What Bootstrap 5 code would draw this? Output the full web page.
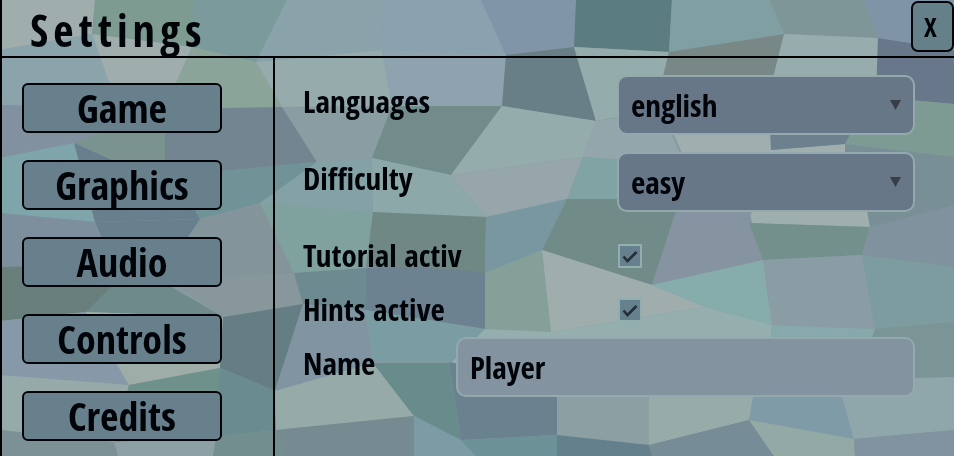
<!DOCTYPE html>
<html lang="en">
<head>
<meta charset="utf-8">
<meta name="viewport" content="width=device-width, initial-scale=1">
<title>Settings</title>
<link rel="stylesheet" href="https://cdn.jsdelivr.net/npm/bootstrap@5.3.0/dist/css/bootstrap.min.css">
<style>
  body { font-family: "Liberation Sans Narrow", "Open Sans Condensed", "Liberation Sans", sans-serif; color: #000408; background: #869ba1; }
  .mosaic { z-index: -1; }
  .window-frame { border-left: 2px solid #000; }
  .title-bar { height: 58px; border-bottom: 2px solid #000; padding-left: 28px; }
  .title-text { font-size: 44px; line-height: 60px; font-weight: 700; letter-spacing: 5px; }
  .close-btn { width: 43px; height: 51px; margin-top: 1px; border: 2px solid #000408; border-radius: 7px; background: #66808a; color: #000408; font-size: 27px; line-height: 1; padding: 0 4px 0 0; }
  .side-menu { width: 273px; border-right: 2px solid #000; padding: 25px 51px 15px 20px; gap: 27px; }
  .side-btn { height: 50px; border: 2px solid #000408; border-radius: 6px; background: #67808c; color: #000408; font-size: 40px; line-height: 46px; padding: 0; font-weight: 700; }
  .side-btn:hover, .close-btn:hover { background: #7690a0; color: #000408; border-color: #000408; }
  .options { padding: 17px 39px 20px 28px; }
  .option { display: grid; grid-template-columns: 314fr 298fr; }
  .option-select { margin-bottom: 17px; }
  .option-name { grid-template-columns: 153fr 459fr; }
  .option-tick { height: 54px; }
  .option-label { font-size: 31px; line-height: 40px; font-weight: 700; white-space: nowrap; padding-bottom: 2px; }
  .raised { padding-bottom: 8px; }
  .field { height: 60px; border: 2px solid #93a9ad; border-radius: 10px; font-size: 31px; line-height: 40px; font-weight: 700; color: #000408; padding: 0 12px; }
  .field-select { background: #677788 url("data:image/svg+xml,%3Csvg xmlns='http://www.w3.org/2000/svg' width='11' height='10'%3E%3Cpath d='M0 0H11L5.500 10Z' fill='%23373e48'/%3E%3C/svg%3E") no-repeat right 12px center; appearance: none; }
  .field-text, .field-text:focus { background: #8394a0; color: #000408; border-color: #93a9ad; }
  .tick { appearance: none; width: 24px; height: 24px; margin: 0 0 0 1px; border: 2px solid #93aeae; background: #67808d; }
  .tick:checked { background: #67808d url("data:image/svg+xml,%3Csvg xmlns='http://www.w3.org/2000/svg' width='20' height='20'%3E%3Cpath d='M3.500 10.500L7.500 15L16.500 6' fill='none' stroke='%23242e37' stroke-width='2.600'/%3E%3C/svg%3E") no-repeat center; }
</style>
</head>
<body>
<svg class="mosaic position-fixed top-0 start-0 w-100 h-100" viewBox="0 0 954 456" preserveAspectRatio="none" aria-hidden="true">
  <g>
    <path fill="#9fadad" d="M0 0H95L92 34L0 50Z"/>
    <path fill="#7d9b90" d="M95 0H193L192 47L92 34Z"/>
    <path fill="#7a9a9b" d="M193 0H287L256 62L192 47Z"/>
    <path fill="#8aa3ab" d="M287 0H383L382 50L256 62Z"/>
    <path fill="#8aa2af" d="M383 0H481L506 55L382 50Z"/>
    <path fill="#8095a8" d="M481 0H576L574 47L506 55Z"/>
    <path fill="#5c7d80" d="M576 0H672L669 52L574 47Z"/>
    <path fill="#7f9fa3" d="M672 0H770L784 34L669 52Z"/>
    <path fill="#7f9699" d="M770 0H864L878 38L784 34Z"/>
    <path fill="#8094a8" d="M864 0H954V50L878 38Z"/>
  </g>
  <g>
    <path fill="#8ba4ac" d="M0 50L92 34L118 108L0 105Z"/>
    <path fill="#a0adad" d="M92 34L192 47L165 108H118Z"/>
    <path fill="#8aa499" d="M192 47L256 62L282 107L165 110Z"/>
    <path fill="#96abac" d="M256 62L382 50L392 106L282 107Z"/>
    <path fill="#8fa2af" d="M382 50L506 55L502 106H392Z"/>
    <path fill="#697f88" d="M506 55L574 47L596 121L502 106Z"/>
    <path fill="#95acac" d="M574 47L669 52L655 110L596 121Z"/>
    <path fill="#788887" d="M669 52L784 34L765 110L655 110Z"/>
    <path fill="#97acac" d="M784 34L878 38L876 110H765Z"/>
    <path fill="#68788a" d="M878 38L954 50V104L876 97Z"/>
  </g>
  <g>
    <path fill="#8291a0" d="M0 105L165 109L74 143L0 158Z"/>
    <path fill="#7b938f" d="M74 143L165 109V172L112 160Z"/>
    <path fill="#728591" d="M165 109L282 107L317 162L222 171L165 176Z"/>
    <path fill="#8a9da3" d="M282 107L392 106L372 158L317 162Z"/>
    <path fill="#718c8b" d="M392 106H502L451 175L372 158Z"/>
    <path fill="#95acad" d="M502 106L596 121L583 157L451 175Z"/>
    <path fill="#92a6ab" d="M596 121L672 110V135L685 165L583 157Z"/>
    <path fill="#a0afad" d="M672 130H770L771 150L845 144L848 160H685Z"/>
    <path fill="#6c818d" d="M770 125H855L845 144L771 150Z"/>
    <path fill="#7d9b93" d="M876 97L954 104V157L845 144Z"/>
  </g>
  <g>
    <path fill="#7ea5aa" d="M0 158L74 143L95 222L0 213Z"/>
    <path fill="#687f8e" d="M74 143L112 160L222 171L193 207L200 219L95 222Z"/>
    <path fill="#6f9397" d="M222 171L317 162L260 203L200 219L193 207Z"/>
    <path fill="#84a1a5" d="M317 162L372 158L373 212L260 203Z"/>
    <path fill="#8da8a9" d="M372 158L451 175L486 217L373 212Z"/>
    <path fill="#96a6aa" d="M451 175L583 157L567 199L486 217Z"/>
    <path fill="#80a3a3" d="M583 157L685 165L660 205L567 199Z"/>
    <path fill="#788f95" d="M845 144L954 157V230H870L845 190Z"/>
    <path fill="#9eafad" d="M755 200H865L870 227L749 223Z"/>
  </g>
  <g>
    <path fill="#7d8f9c" d="M0 213L95 222L112 275L0 267Z"/>
    <path fill="#687f8e" d="M95 222L200 219L180 250L112 265Z"/>
    <path fill="#84949b" d="M200 219L260 203L294 273L223 290L170 270Z"/>
    <path fill="#80a29f" d="M260 203L373 212L366 268L294 273Z"/>
    <path fill="#6f8884" d="M373 212L486 217L485 273L366 267Z"/>
    <path fill="#7997a0" d="M486 217L567 199L542 250L485 273Z"/>
    <path fill="#718b88" d="M567 199H680L652 285L542 250Z"/>
    <path fill="#8594a0" d="M678 205H747L763 260L652 285Z"/>
    <path fill="#73908c" d="M749 223L870 227L862 255L763 260Z"/>
    <path fill="#7f929d" d="M870 227L954 205V267L862 255Z"/>
  </g>
  <g>
    <path fill="#687f7c" d="M0 267L112 265V290L86 312L0 321Z"/>
    <path fill="#6f8a8b" d="M112 286L170 286L223 317L86 312Z"/>
    <path fill="#87979c" d="M170 280L294 273L303 304L223 317Z"/>
    <path fill="#6d8a90" d="M294 273L366 268L365 310L303 304Z"/>
    <path fill="#6c8290" d="M366 268Q425 265 485 273V329L365 310Z"/>
    <path fill="#84a098" d="M485 273L542 250L551 332L485 329Z"/>
    <path fill="#9fadad" d="M542 250L652 285L705 307L551 332Z"/>
    <path fill="#86acac" d="M652 285L763 260L772 325L705 307Z"/>
    <path fill="#8a9ca4" d="M763 260L862 255L875 329L772 325Z"/>
    <path fill="#7c9c9f" d="M862 255L954 267V322L875 329Z"/>
  </g>
  <g>
    <path fill="#8799a9" d="M0 321L86 312L129 385L0 375Z"/>
    <path fill="#9fada9" d="M86 312L223 317L220 368L129 385Z"/>
    <path fill="#657e83" d="M223 317L303 304L275 391L220 368Z"/>
    <path fill="#8194a2" d="M303 304L365 310L373 363L275 391Z"/>
    <path fill="#7a9da3" d="M365 310L485 329L452 362H373Z"/>
    <path fill="#95aeae" d="M485 329L551 332L705 307L772 325L770 365H449Z"/>
    <path fill="#87a9ab" d="M772 325L875 329L868 350H770Z"/>
    <path fill="#7b9495" d="M875 329L954 322V377L905 380L868 350Z"/>
  </g>
  <g>
    <path fill="#95aaa9" d="M0 375L129 385L114 442L0 430Z"/>
    <path fill="#6f918b" d="M129 385L220 368V440L114 442Z"/>
    <path fill="#6b8c8e" d="M220 368L275 391L276 430L216 437Z"/>
    <path fill="#96aaa7" d="M275 391L373 363L414 416L276 430Z"/>
    <path fill="#688b8c" d="M373 363H449L461 440L414 416Z"/>
    <path fill="#6a8290" d="M449 362L557 380V435L461 440Z"/>
    <path fill="#8c9fa3" d="M557 380H649V445L557 435Z"/>
    <path fill="#97aba8" d="M649 380H756L749 420L649 445Z"/>
    <path fill="#7f9ba8" d="M756 380H837L854 439L749 420Z"/>
    <path fill="#8fa6ab" d="M837 380L954 377V430L854 439Z"/>
  </g>
  <g>
    <path fill="#7c9196" d="M0 430L114 442L118 456H0Z"/>
    <path fill="#8ca0a5" d="M114 442L216 437L213 456H118Z"/>
    <path fill="#738e8e" d="M216 437L276 430L285 456H213Z"/>
    <path fill="#768a92" d="M276 430L414 416V456H285Z"/>
    <path fill="#7c9ba4" d="M414 416L461 440L476 456H414Z"/>
    <path fill="#6c9196" d="M461 440L557 435V456H476Z"/>
    <path fill="#64808d" d="M557 435L649 445L652 456H557Z"/>
    <path fill="#768c97" d="M649 445L749 420L774 456H652Z"/>
    <path fill="#93a9a5" d="M749 420L854 439L855 456H774Z"/>
    <path fill="#8193a0" d="M854 439L954 430V456H855Z"/>
  </g>
</svg>

<div class="window-frame d-flex flex-column min-vh-100">
  <header class="title-bar d-flex align-items-start justify-content-between">
    <h1 class="title-text m-0">Settings</h1>
    <button type="button" class="btn close-btn" aria-label="Close settings">X</button>
  </header>
  <div class="d-flex flex-grow-1">
    <nav class="side-menu d-flex flex-column flex-shrink-0" aria-label="Settings sections">
      <button type="button" class="btn side-btn">Game</button>
      <button type="button" class="btn side-btn">Graphics</button>
      <button type="button" class="btn side-btn">Audio</button>
      <button type="button" class="btn side-btn">Controls</button>
      <button type="button" class="btn side-btn">Credits</button>
    </nav>
    <main class="options flex-grow-1">
      <form>
        <div class="option option-select align-items-center">
          <label class="option-label raised" for="language">Languages</label>
          <select class="field field-select w-100" id="language"><option>english</option></select>
        </div>
        <div class="option option-select align-items-center">
          <label class="option-label raised" for="difficulty">Difficulty</label>
          <select class="field field-select w-100" id="difficulty"><option>easy</option></select>
        </div>
        <div class="option option-tick align-items-center">
          <label class="option-label" for="tutorial">Tutorial activ</label>
          <input class="tick" type="checkbox" id="tutorial" checked>
        </div>
        <div class="option option-tick align-items-center">
          <label class="option-label" for="hints">Hints active</label>
          <input class="tick" type="checkbox" id="hints" checked>
        </div>
        <div class="option option-name align-items-center">
          <label class="option-label raised" for="player">Name</label>
          <input class="form-control field field-text" type="text" id="player" value="Player">
        </div>
      </form>
    </main>
  </div>
</div>
<script src="https://cdn.jsdelivr.net/npm/bootstrap@5.3.0/dist/js/bootstrap.bundle.min.js"></script>
</body>
</html>
